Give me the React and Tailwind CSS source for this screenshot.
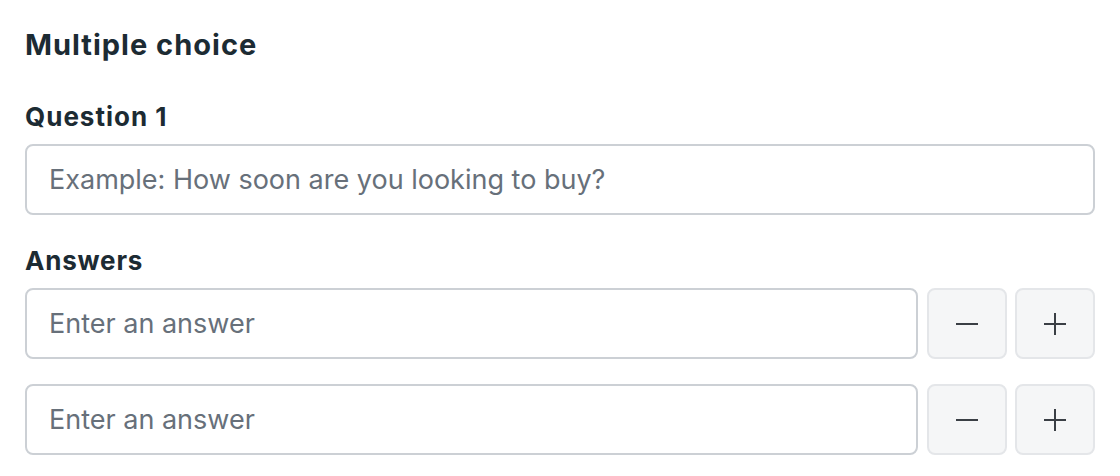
import React from "react";

function Minus() {
  return (
    <svg width="24" height="24" viewBox="0 0 24 24" fill="none">
      <path d="M1 12h22" stroke="#3a3f45" strokeWidth="2" />
    </svg>
  );
}
function Plus() {
  return (
    <svg width="24" height="24" viewBox="0 0 24 24" fill="none">
      <path d="M1 12h22M12 1v22" stroke="#3a3f45" strokeWidth="2" />
    </svg>
  );
}

function AnswerRow() {
  return (
    <div className="flex items-stretch h-[71px]">
      <div className="flex-1 flex items-center border-2 border-[#ccd0d5] rounded-[8px] bg-white pl-[22px]">
        <span className="text-[27px] text-[#67707a] leading-none">Enter an answer</span>
      </div>
      <button className="ml-[9px] w-[80px] flex items-center justify-center bg-[#f5f6f7] border-2 border-[#e4e6e9] rounded-[8px]">
        <Minus />
      </button>
      <button className="ml-[8px] w-[80px] flex items-center justify-center bg-[#f5f6f7] border-2 border-[#e4e6e9] rounded-[8px]">
        <Plus />
      </button>
    </div>
  );
}

export default function App() {
  return (
    <div
      className="w-[1120px] h-[476px] bg-white pl-[25px] pr-[25px] pt-[25px]"
      style={{ fontFamily: "Inter, 'Noto Sans', sans-serif" }}
    >
      <h1 className="text-[29px] font-bold text-[#1c2b33] leading-[40px] tracking-[1px]">Multiple choice</h1>
      <h2 className="mt-[36px] text-[26px] font-bold text-[#1c2b33] leading-[32px] tracking-[1px]">Question 1</h2>
      <div className="mt-[11px] h-[71px] flex items-center border-2 border-[#ccd0d5] rounded-[8px] bg-white pl-[22px]">
        <span className="text-[27px] text-[#67707a] leading-none">Example: How soon are you looking to buy?</span>
      </div>
      <h2 className="mt-[30px] text-[26px] font-bold text-[#1c2b33] leading-[32px] tracking-[0.8px]">Answers</h2>
      <div className="mt-[11px] flex flex-col gap-[25px]">
        <AnswerRow />
        <AnswerRow />
      </div>
    </div>
  );
}
